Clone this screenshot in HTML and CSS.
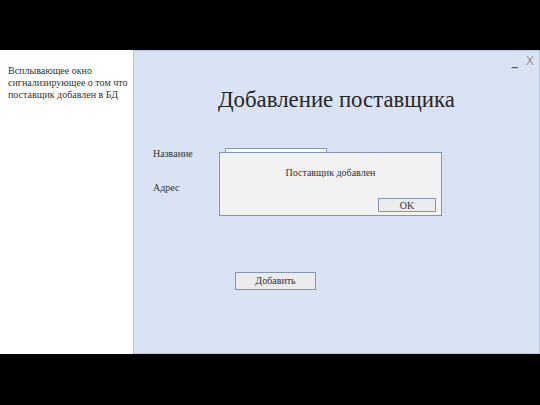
FILE: index.html
```html
<!DOCTYPE html>
<html lang="ru">
<head>
<meta charset="utf-8">
<link rel="stylesheet" href="styles.css">
</head>
<body>
<div class="bar-top"></div>
<div class="middle">
  <div class="note">Всплывающее окно сигнализирующее о том что поставщик добавлен в БД</div>
  <div class="window">
    <div class="controls"><span class="min">_</span><span class="close">X</span></div>
    <h1 class="title">Добавление поставщика</h1>
    <div class="form">
      <div class="row"><span class="label">Название</span><span class="field"></span></div>
      <div class="row"><span class="label">Адрес</span><span class="field"></span></div>
    </div>
    <div class="actions"><span class="btn add">Добавить</span></div>
    <div class="popup">
      <div class="popup-text">Поставщик добавлен</div>
      <div class="popup-actions"><span class="btn ok">OK</span></div>
    </div>
  </div>
</div>
<div class="bar-bottom"></div>
</body>
</html>
```
FILE: styles.css
```css
html, body {
  margin: 0;
  padding: 0;
  background: #000;
  width: 540px;
  height: 405px;
  overflow: hidden;
  font-family: "Liberation Serif", "Times New Roman", serif;
}
.bar-top { height: 50px; }
.bar-bottom { height: 51px; }
.middle {
  display: flex;
  height: 304px;
}
.note {
  width: 125px;
  background: #fff;
  padding: 15px 0 0 8px;
  font-size: 10px;
  line-height: 12px;
  color: #333;
}
.window {
  position: relative;
  flex: 1;
  background: #dae3f3;
  border: 1px solid #b4c7e7;
  box-sizing: border-box;
}
.controls {
  display: flex;
  justify-content: flex-end;
  gap: 8px;
  padding: 2px 5px 0 0;
  height: 16px;
  font-family: "DejaVu Sans", sans-serif;
  font-size: 12px;
  line-height: 16px;
  color: #555;
}
.controls .min { font-weight: bold; }
.controls .close { font-weight: 300; }
.title {
  margin: 17px 0 0 0;
  text-align: center;
  font-weight: normal;
  font-size: 22.8px;
  line-height: 28px;
  color: #262626;
}
.form {
  margin-top: 34px;
  padding-left: 19px;
  display: flex;
  flex-direction: column;
  gap: 14px;
}
.row {
  display: flex;
  align-items: flex-start;
  height: 20px;
}
.label {
  width: 72px;
  font-size: 10px;
  line-height: 12px;
  color: #333;
}
.field {
  width: 102px;
  height: 20px;
  box-sizing: border-box;
  background: #fff;
  border: 1px solid #8497b0;
}
.actions {
  margin-top: 68px;
  padding-left: 101px;
}
.btn {
  display: inline-flex;
  align-items: center;
  justify-content: center;
  box-sizing: border-box;
  background: #ebebeb;
  border: 1px solid #8497b0;
  font-size: 10px;
  color: #333;
}
.add { width: 81px; height: 18px; }
.popup {
  position: absolute;
  left: 85px;
  top: 101px;
  width: 223px;
  height: 64px;
  box-sizing: border-box;
  background: #f2f2f2;
  border: 1px solid #8497b0;
  display: flex;
  flex-direction: column;
}
.popup-text {
  text-align: center;
  margin-top: 14px;
  font-size: 10px;
  color: #333;
}
.popup-actions {
  margin-top: auto;
  margin-bottom: 3px;
  display: flex;
  justify-content: flex-end;
  padding-right: 5px;
}
.ok { width: 58px; height: 14px; }
```
